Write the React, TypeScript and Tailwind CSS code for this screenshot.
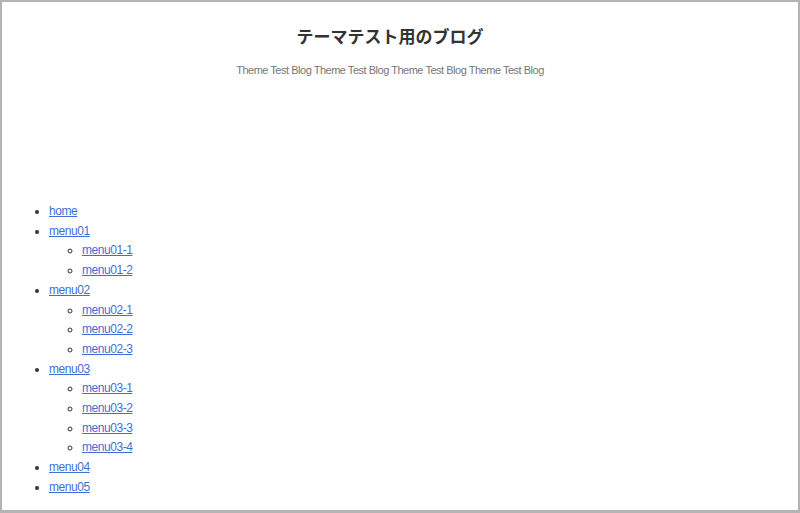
import React from "react";

const menu: { label: string; children?: string[] }[] = [
  { label: "home" },
  { label: "menu01", children: ["menu01-1", "menu01-2"] },
  { label: "menu02", children: ["menu02-1", "menu02-2", "menu02-3"] },
  { label: "menu03", children: ["menu03-1", "menu03-2", "menu03-3", "menu03-4"] },
  { label: "menu04" },
  { label: "menu05" },
];

export default function App() {
  return (
    <div className="box-border h-[513px] w-[800px] overflow-hidden border-2 border-b-[3px] border-[#b4b4b4] bg-white font-['Liberation_Sans','Noto_Sans_CJK_JP',sans-serif]">
      <header className="flex flex-col items-center pr-[20px] pt-[21px]">
        <h1 className="text-[17px] font-bold leading-[26px] text-[#333] font-['Noto_Sans_CJK_JP',sans-serif]">
          テーマテスト用のブログ
        </h1>
        <p className="mt-[13px] text-[11px] leading-[16px] tracking-[-0.48px] text-[#777]">
          Theme Test Blog Theme Test Blog Theme Test Blog Theme Test Blog
        </p>
      </header>
      <nav className="mt-[124px]">
        <ul className="list-disc pl-[47px] text-[12px] leading-[19.7px] tracking-[-0.45px] text-[#333] marker:text-[#333]">
          {menu.map((m) => (
            <li key={m.label}>
              <a href="#" className="text-[#3f6fd6] underline">
                {m.label}
              </a>
              {m.children && (
                <ul className="list-[circle] pl-[33px]">
                  {m.children.map((c) => (
                    <li key={c}>
                      <a href="#" className="text-[#3f6fd6] underline">
                        {c}
                      </a>
                    </li>
                  ))}
                </ul>
              )}
            </li>
          ))}
        </ul>
      </nav>
    </div>
  );
}
